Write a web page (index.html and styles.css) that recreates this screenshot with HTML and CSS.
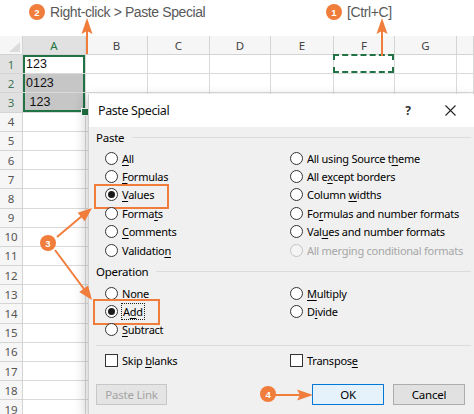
FILE: index.html
```html
<!DOCTYPE html>
<html lang="en">
<head>
<meta charset="utf-8">
<title>Paste Special</title>
<link rel="stylesheet" href="styles.css">
</head>
<body>
<div class="page">
  <div class="banner">
    <div class="callout first"><span class="badge">2</span><span class="note">Right-click &gt; Paste Special</span></div>
    <div class="callout"><span class="badge">1</span><span class="note">[Ctrl+C]</span></div>
  </div>

  <div class="sheet">
    <div class="hd corner"><span class="tri"></span></div>
    <div class="hd col on">A</div><div class="hd col">B</div><div class="hd col">C</div><div class="hd col">D</div><div class="hd col">E</div><div class="hd col">F</div><div class="hd col">G</div><div class="hd col"></div>

    <div class="rh on">1</div><div class="c a1">123</div><div class="c"></div><div class="c"></div><div class="c"></div><div class="c"></div><div class="c f1"></div><div class="c"></div><div class="c"></div>
    <div class="rh on">2</div><div class="c a2 shade">0123</div><div class="c"></div><div class="c"></div><div class="c"></div><div class="c"></div><div class="c"></div><div class="c"></div><div class="c"></div>
    <div class="rh on">3</div><div class="c a3 shade">&nbsp;123</div><div class="c"></div><div class="c"></div><div class="c"></div><div class="c"></div><div class="c"></div><div class="c"></div><div class="c"></div>

    <div class="rh">4</div><div class="c"></div><div class="c rest"></div>
    <div class="rh">5</div><div class="c"></div><div class="c rest"></div>
    <div class="rh">6</div><div class="c"></div><div class="c rest"></div>
    <div class="rh">7</div><div class="c"></div><div class="c rest"></div>
    <div class="rh">8</div><div class="c"></div><div class="c rest"></div>
    <div class="rh">9</div><div class="c"></div><div class="c rest"></div>
    <div class="rh">10</div><div class="c"></div><div class="c rest"></div>
    <div class="rh">11</div><div class="c"></div><div class="c rest"></div>
    <div class="rh">12</div><div class="c"></div><div class="c rest"></div>
    <div class="rh">13</div><div class="c"></div><div class="c rest"></div>
    <div class="rh">14</div><div class="c"></div><div class="c rest"></div>
    <div class="rh">15</div><div class="c"></div><div class="c rest"></div>
    <div class="rh">16</div><div class="c"></div><div class="c rest"></div>
    <div class="rh">17</div><div class="c"></div><div class="c rest"></div>
    <div class="rh">18</div><div class="c"></div><div class="c rest"></div>
    <div class="rh">19</div><div class="c"></div><div class="c rest"></div>
  </div>

  <div class="dialog">
    <div class="titlebar">
      <span class="title">Paste Special</span>
      <span class="help">?</span>
      <span class="close"><svg width="11" height="11" viewBox="0 0 11 11"><path d="M0.5 0.5 L10.5 10.5 M10.5 0.5 L0.5 10.5" stroke="#222" stroke-width="1.1" fill="none"/></svg></span>
    </div>
    <div class="dbody">
      <div class="legend"><span>Paste</span><i></i></div>
      <div class="opts six">
        <div class="opt"><span class="radio"></span><span><u>A</u>ll</span></div>
        <div class="opt"><span class="radio"></span><span>All using Source t<u>h</u>eme</span></div>
        <div class="opt"><span class="radio"></span><span><u>F</u>ormulas</span></div>
        <div class="opt"><span class="radio"></span><span>All e<u>x</u>cept borders</span></div>
        <div class="opt hl hl-values"><span class="radio on"></span><span><u>V</u>alues</span></div>
        <div class="opt"><span class="radio"></span><span>Column <u>w</u>idths</span></div>
        <div class="opt"><span class="radio"></span><span>Forma<u>t</u>s</span></div>
        <div class="opt"><span class="radio"></span><span>Fo<u>r</u>mulas and number formats</span></div>
        <div class="opt"><span class="radio"></span><span><u>C</u>omments</span></div>
        <div class="opt"><span class="radio"></span><span>Val<u>u</u>es and number formats</span></div>
        <div class="opt"><span class="radio"></span><span>Validatio<u>n</u></span></div>
        <div class="opt off"><span class="radio"></span><span>All merging conditional formats</span></div>
      </div>
      <div class="legend op"><span>Operation</span><i></i></div>
      <div class="opts three">
        <div class="opt"><span class="radio"></span><span>N<u>o</u>ne</span></div>
        <div class="opt"><span class="radio"></span><span><u>M</u>ultiply</span></div>
        <div class="opt hl hl-add"><span class="radio on"></span><span class="focus">A<u>d</u>d</span></div>
        <div class="opt"><span class="radio"></span><span>D<u>i</u>vide</span></div>
        <div class="opt"><span class="radio"></span><span><u>S</u>ubtract</span></div>
        <div></div>
      </div>
      <div class="sep"></div>
      <div class="opts checks">
        <div class="opt"><span class="box"></span><span>Skip <u>b</u>lanks</span></div>
        <div class="opt"><span class="box"></span><span>Transpos<u>e</u></span></div>
      </div>
      <div class="buttons">
        <span class="btn disabled">Paste Link</span>
        <span class="spacer"><span class="badge">4</span></span>
        <span class="btn ok">OK</span>
        <span class="btn">Cancel</span>
      </div>
    </div>
  </div>

  <span class="badge b3">3</span>

  <svg class="arrows" width="474" height="414" viewBox="0 0 474 414">
    <g stroke="#f07d3c" stroke-width="2" fill="none">
      <path d="M87 54 V30"/>
      <path d="M382 56 V30"/>
      <path d="M57 237 L82 216"/>
      <path d="M55 250 L84 289"/>
      <path d="M271 395 H302"/>
    </g>
    <g fill="#f07d3c">
      <polygon points="87,18 81.5,34 87,31 92.5,34"/>
      <polygon points="382,18 376.5,34 382,31 387.5,34"/>
      <polygon points="92,208 77.7,212.7 81.3,217 84.8,221.2"/>
      <polygon points="92,300 88.1,285.5 83.7,288.8 79.3,292"/>
      <polygon points="313,395 297,389.5 300,395 297,400.5"/>
    </g>
  </svg>
</div>
</body>
</html>
```

FILE: styles.css
```css
* { box-sizing: border-box; }
html, body { margin: 0; padding: 0; background: #fff; }
.page {
  position: relative;
  width: 474px;
  height: 414px;
  overflow: hidden;
  font-family: "Noto Sans", "Liberation Sans", sans-serif;
}

/* annotations */
.banner {
  display: flex;
  height: 36px;
  padding: 4px 0 0 29px;
  align-items: flex-start;
}
.callout { display: flex; align-items: center; gap: 5px; }
.callout.first { width: 297px; }
.badge {
  display: inline-flex;
  align-items: center;
  justify-content: center;
  width: 16px;
  height: 16px;
  border-radius: 50%;
  background: #f07d3c;
  color: #fff;
  font: bold 9.5px "Liberation Sans", sans-serif;
}
.note {
  font-family: "Liberation Sans", sans-serif;
  font-size: 14px;
  letter-spacing: -0.4px;
  color: #595959;
  line-height: 16px;
}
.b3 { position: absolute; left: 40px; top: 235px; z-index: 3; }

.arrows { position: absolute; left: 0; top: 0; z-index: 4; pointer-events: none; }

/* spreadsheet */
.sheet {
  display: grid;
  grid-template-columns: 23px 63px 62px 62px 61px 63px 61px 62px 1fr;
  grid-template-rows: 19px repeat(19, 19.2px);
}
.hd, .rh, .c {
  border-right: 1px solid #dadada;
  border-bottom: 1px solid #dadada;
}
.hd {
  background: #f6f6f6;
  color: #444;
  font-size: 11.5px;
  display: flex;
  align-items: center;
  justify-content: center;
  border-color: #d4d4d4;
}
.corner { position: relative; }
.tri {
  position: absolute;
  right: 2px;
  bottom: 2px;
  width: 0;
  height: 0;
  border-left: 11px solid transparent;
  border-bottom: 10px solid #dcdcdc;
}
.hd.on { background: #e1e1e1; color: #217346; }
.rh {
  background: #f6f6f6;
  color: #555;
  font-size: 11.5px;
  display: flex;
  align-items: center;
  justify-content: center;
  border-color: #d4d4d4;
}
.rh.on { background: #e1e1e1; color: #3f7557; }
.c {
  font-family: "Liberation Sans", sans-serif;
  font-size: 12.5px;
  color: #111;
  display: flex;
  align-items: center;
  padding-left: 3px;
  white-space: pre;
}
.rest { grid-column: span 7; }
.shade { background: #c6c6c6; }
.a1 { box-shadow: inset 2px 0 #217346, inset -2px 0 #217346, inset 0 2px #217346; }
.a2 { box-shadow: inset 2px 0 #217346, inset -2px 0 #217346; }
.a3 { position: relative; box-shadow: inset 2px 0 #217346, inset -2px 0 #217346, inset 0 -2px #217346; }
.a3::after {
  content: "";
  position: absolute;
  right: -4px;
  bottom: -4px;
  width: 6px;
  height: 6px;
  background: #217346;
  border: 1px solid #fff;
}
.f1 { position: relative; }
.f1::after {
  content: "";
  position: absolute;
  left: -1px;
  top: -1px;
  right: 0;
  bottom: 0;
  border: 2px dashed #217346;
}

/* dialog */
.dialog {
  position: absolute;
  left: 88px;
  top: 94px;
  width: 388px;
  height: 322px;
  background: #f0f0f0;
  border-left: 1px solid #cfcfcf;
  box-shadow: -4px 2px 10px rgba(0,0,0,0.16);
  z-index: 2;
  font-size: 11px;
  letter-spacing: -0.25px;
  color: #000;
}
.titlebar {
  height: 33px;
  background: #fff;
  display: flex;
  align-items: center;
  padding-left: 9px;
}
.title { flex: 1; font-size: 12.5px; letter-spacing: -0.4px; color: #111; }
.help { width: 20px; text-align: center; font-size: 12px; font-weight: bold; color: #333; margin-right: 27px; }
.close { width: 11px; height: 11px; display: flex; margin-right: 20px; }

.dbody { padding: 2px 11px 0 7px; }
.legend {
  display: flex;
  align-items: center;
  height: 16px;
  margin-right: -6px;
  font-size: 11.5px;
}
.legend i { flex: 1; height: 1px; background: #dcdcdc; margin-left: 8px; }
.legend.op { margin-top: 4.6px; }

.opts {
  display: grid;
  grid-template-columns: 185px 1fr;
  padding-left: 9px;
  margin-top: 4px;
}
.six { grid-template-rows: repeat(6, 18.4px); }
.three { grid-template-rows: repeat(3, 18.4px); }
.checks { grid-template-rows: 18px; margin-top: 6px; }
.opt { display: flex; align-items: center; gap: 4px; position: relative; width: max-content; }
.opt u { text-decoration-thickness: 1px; text-underline-offset: 2px; }
.radio {
  width: 13px;
  height: 13px;
  border-radius: 50%;
  border: 1px solid #333;
  background: #fff;
  display: flex;
  align-items: center;
  justify-content: center;
}
.radio.on::after { content: ""; width: 7px; height: 7px; border-radius: 50%; background: #1a1a1a; }
.off { color: #a6a6a6; }
.off .radio { border-color: #c4c4c4; background: #f4f4f4; }
.box { width: 13px; height: 13px; border: 1px solid #333; background: #fff; }
.focus { outline: 1px dotted #222; outline-offset: 0; padding: 0 1px; }

.hl::after {
  content: "";
  position: absolute;
  border: 2px solid #f07d3c;
}
.hl-values::after { left: -11px; top: -2px; width: 71px; height: 21px; }
.hl-add::after { left: -12px; top: -3px; width: 63px; height: 22px; }

.sep { height: 1px; background: #dcdcdc; margin: 5.8px -6px 0 0; }

.buttons {
  display: flex;
  align-items: center;
  margin-top: 14px;
  height: 21px;
  gap: 9px;
}
.btn {
  height: 21px;
  width: 72px;
  display: flex;
  align-items: center;
  justify-content: center;
  background: #e1e1e1;
  border: 1px solid #adadad;
  font-size: 11.5px;
}
.btn.disabled { width: 71px; background: #e4e4e4; border-color: #c7c7c7; color: #a3a3a3; }
.btn.ok { background: #e5f1fb; border: 1px solid #0078d7; }
.spacer { flex: 1; display: flex; align-items: center; padding-left: 84px; }
```
